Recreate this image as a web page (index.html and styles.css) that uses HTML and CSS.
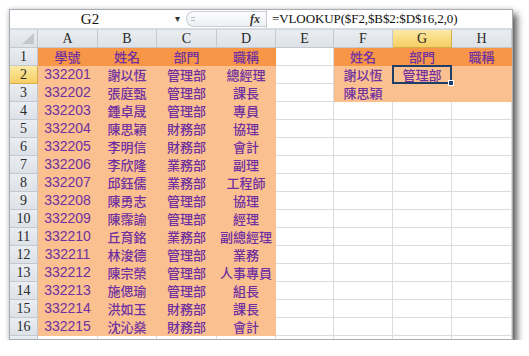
FILE: index.html
```html
<!DOCTYPE html>
<html lang="zh-Hant">
<head>
    <meta charset="UTF-8">
    <title>VLOOKUP</title>
    <link rel="stylesheet" href="styles.css">
</head>
<body>
    <div class="window">
        <div class="formula-bar">
            <div class="name-box">G2</div>
            <div class="name-drop">&#9662;</div>
            <div class="fx-area"><span class="grip"></span><span class="fx">fx</span></div>
            <div class="formula">=VLOOKUP($F2,$B$2:$D$16,2,0)</div>
        </div>

        <div class="sheet">
            <div class="corner"></div>
            <div class="col-head">A</div><div class="col-head">B</div><div class="col-head">C</div><div class="col-head">D</div>
            <div class="col-head">E</div><div class="col-head">F</div><div class="col-head active">G</div><div class="col-head">H</div>

            <div class="row-head">1</div>
            <div class="cell head">學號</div><div class="cell head">姓名</div><div class="cell head">部門</div><div class="cell head">職稱</div>
            <div class="cell"></div><div class="cell head">姓名</div><div class="cell head">部門</div><div class="cell head">職稱</div>

            <div class="row-head active">2</div>
            <div class="cell fill n">332201</div><div class="cell fill">謝以恆</div><div class="cell fill">管理部</div><div class="cell fill">總經理</div>
            <div class="cell"></div><div class="cell fill">謝以恆</div><div class="cell fill selected">管理部</div><div class="cell fill"></div>

            <div class="row-head">3</div>
            <div class="cell fill n">332202</div><div class="cell fill">張庭甄</div><div class="cell fill">管理部</div><div class="cell fill">課長</div>
            <div class="cell"></div><div class="cell fill">陳思穎</div><div class="cell fill"></div><div class="cell fill"></div>

            <div class="row-head">4</div>
            <div class="cell fill n">332203</div><div class="cell fill">鍾卓晟</div><div class="cell fill">管理部</div><div class="cell fill">專員</div>
            <div class="cell"></div><div class="cell"></div><div class="cell"></div><div class="cell"></div>

            <div class="row-head">5</div>
            <div class="cell fill n">332204</div><div class="cell fill">陳思穎</div><div class="cell fill">財務部</div><div class="cell fill">協理</div>
            <div class="cell"></div><div class="cell"></div><div class="cell"></div><div class="cell"></div>

            <div class="row-head">6</div>
            <div class="cell fill n">332205</div><div class="cell fill">李明信</div><div class="cell fill">財務部</div><div class="cell fill">會計</div>
            <div class="cell"></div><div class="cell"></div><div class="cell"></div><div class="cell"></div>

            <div class="row-head">7</div>
            <div class="cell fill n">332206</div><div class="cell fill">李欣隆</div><div class="cell fill">業務部</div><div class="cell fill">副理</div>
            <div class="cell"></div><div class="cell"></div><div class="cell"></div><div class="cell"></div>

            <div class="row-head">8</div>
            <div class="cell fill n">332207</div><div class="cell fill">邱鈺儒</div><div class="cell fill">業務部</div><div class="cell fill">工程師</div>
            <div class="cell"></div><div class="cell"></div><div class="cell"></div><div class="cell"></div>

            <div class="row-head">9</div>
            <div class="cell fill n">332208</div><div class="cell fill">陳勇志</div><div class="cell fill">管理部</div><div class="cell fill">協理</div>
            <div class="cell"></div><div class="cell"></div><div class="cell"></div><div class="cell"></div>

            <div class="row-head">10</div>
            <div class="cell fill n">332209</div><div class="cell fill">陳霈諭</div><div class="cell fill">管理部</div><div class="cell fill">經理</div>
            <div class="cell"></div><div class="cell"></div><div class="cell"></div><div class="cell"></div>

            <div class="row-head">11</div>
            <div class="cell fill n">332210</div><div class="cell fill">丘育銘</div><div class="cell fill">業務部</div><div class="cell fill">副總經理</div>
            <div class="cell"></div><div class="cell"></div><div class="cell"></div><div class="cell"></div>

            <div class="row-head">12</div>
            <div class="cell fill n">332211</div><div class="cell fill">林浚德</div><div class="cell fill">管理部</div><div class="cell fill">業務</div>
            <div class="cell"></div><div class="cell"></div><div class="cell"></div><div class="cell"></div>

            <div class="row-head">13</div>
            <div class="cell fill n">332212</div><div class="cell fill">陳宗榮</div><div class="cell fill">管理部</div><div class="cell fill">人事專員</div>
            <div class="cell"></div><div class="cell"></div><div class="cell"></div><div class="cell"></div>

            <div class="row-head">14</div>
            <div class="cell fill n">332213</div><div class="cell fill">施偲瑜</div><div class="cell fill">管理部</div><div class="cell fill">組長</div>
            <div class="cell"></div><div class="cell"></div><div class="cell"></div><div class="cell"></div>

            <div class="row-head">15</div>
            <div class="cell fill n">332214</div><div class="cell fill">洪如玉</div><div class="cell fill">財務部</div><div class="cell fill">課長</div>
            <div class="cell"></div><div class="cell"></div><div class="cell"></div><div class="cell"></div>

            <div class="row-head">16</div>
            <div class="cell fill n">332215</div><div class="cell fill">沈沁燊</div><div class="cell fill">財務部</div><div class="cell fill">會計</div>
            <div class="cell"></div><div class="cell"></div><div class="cell"></div><div class="cell"></div>

            <div class="row-head"></div>
            <div class="cell"></div><div class="cell"></div><div class="cell"></div><div class="cell"></div>
            <div class="cell"></div><div class="cell"></div><div class="cell"></div><div class="cell"></div>
        </div>
    </div>
</body>
</html>
```

FILE: styles.css
```css
body {
    margin: 0;
    background: #fff;
    font-family: "Liberation Serif", serif;
}
.window {
    margin: 9px 0 0 9px;
    width: 504px;
    height: 331px;
    box-sizing: border-box;
    border: 1px solid #a9aeb5;
    background: #fff;
    overflow: hidden;
    box-shadow: 4px 5px 7px rgba(0, 0, 0, 0.65), -1px -1px 4px rgba(0, 0, 0, 0.12);
}
.formula-bar {
    display: flex;
    height: 20px;
    box-sizing: border-box;
    border-bottom: 2px solid #d6dae0;
    background: #fff;
    font-size: 14px;
    line-height: 18px;
    color: #111;
}
.name-box {
    width: 160px;
    text-align: center;
    font-size: 15px;
}
.name-drop {
    width: 14px;
    font-size: 10px;
    color: #333;
    text-align: center;
}
.fx-area {
    display: flex;
    align-items: center;
    justify-content: space-between;
    width: 80px;
    margin: 1px 0 1px 2px;
    padding: 0 6px 0 4px;
    box-sizing: border-box;
    border: 1px solid #c9cdd3;
    border-right: none;
    border-radius: 9px 0 0 9px;
    background: linear-gradient(#fcfcfd, #eef0f3);
}
.grip {
    width: 4px;
    height: 2px;
    border-top: 1px solid #b9bdc3;
    border-bottom: 1px solid #b9bdc3;
}
.fx {
    font-style: italic;
    font-weight: bold;
    font-size: 12px;
    color: #333;
}
.formula {
    flex: 1;
    padding-left: 5px;
    border-left: 1px solid #c9cdd3;
    font-size: 13px;
    letter-spacing: -0.1px;
}
.sheet {
    display: grid;
    grid-template-columns: 28px 60px 59px 60px 59px 58px 59px 59px 60px;
    grid-auto-rows: 18px;
}
.corner, .col-head, .row-head {
    box-sizing: border-box;
    background: linear-gradient(#eaedf1, #dde2e8);
    border-right: 1px solid #c3c8cf;
    border-bottom: 1px solid #c3c8cf;
    color: #2a2a2a;
    text-align: center;
    font-size: 14px;
    line-height: 17px;
}
.corner {
    position: relative;
}
.corner::after {
    content: "";
    position: absolute;
    right: 3px;
    bottom: 3px;
    border-left: 12px solid transparent;
    border-bottom: 11px solid #c3c7cd;
}
.col-head.active, .row-head.active {
    background: linear-gradient(#fce9a4, #f5cf63);
    border-color: #d7ad4b;
}
.cell {
    box-sizing: border-box;
    border-right: 1px solid #dadcdf;
    border-bottom: 1px solid #dadcdf;
    font-family: "Noto Sans CJK TC", sans-serif;
    font-size: 13px;
    font-weight: 500;
    line-height: 17px;
    color: #7030a0;
    text-align: center;
    white-space: nowrap;
}
.cell.head {
    background: #f79646;
    border-color: #f79646;
}
.cell.fill {
    background: #fac08f;
    border-color: #fac08f;
}
.cell.n {
    font-family: "Liberation Sans", sans-serif;
    font-size: 14px;
    font-weight: normal;
}
.cell.selected {
    position: relative;
}
.cell.selected::before {
    content: "";
    position: absolute;
    left: -1px;
    top: -1px;
    right: -1px;
    bottom: -1px;
    border: 2px solid #1f3e68;
}
.cell.selected::after {
    content: "";
    position: absolute;
    right: -3px;
    bottom: -3px;
    width: 4px;
    height: 4px;
    background: #1f3e68;
    border: 1px solid #fff;
}
```
